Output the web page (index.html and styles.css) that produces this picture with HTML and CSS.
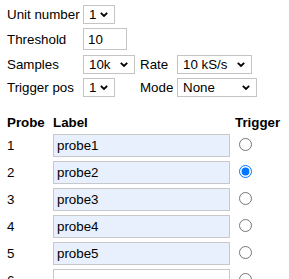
FILE: index.html
```html
<!DOCTYPE html>
<html lang="en">
<head>
  <meta charset="UTF-8">
  <title>Probe setup</title>
  <link rel="stylesheet" href="styles.css">
</head>
<body>

<table class="setup">
  <colgroup>
    <col class="k1"><col class="k2"><col class="k3"><col class="k4">
  </colgroup>
  <tr class="r1">
    <td>Unit number</td>
    <td colspan="3"><select class="sel w32"><option>1</option></select></td>
  </tr>
  <tr class="r2">
    <td>Threshold</td>
    <td colspan="3"><input type="text" class="num" value="10"></td>
  </tr>
  <tr class="r3">
    <td>Samples</td>
    <td><select class="sel w52"><option>10k</option></select></td>
    <td>Rate</td>
    <td><select class="sel w75"><option>10 kS/s</option></select></td>
  </tr>
  <tr class="r4">
    <td>Trigger pos</td>
    <td><select class="sel w32"><option>1</option></select></td>
    <td>Mode</td>
    <td><select class="sel w80"><option>None</option></select></td>
  </tr>
</table>

<table class="probes" id="probeTable">
  <colgroup>
    <col class="pcol"><col class="lcol"><col class="tcol">
  </colgroup>
  <tr class="head">
    <th>Probe</th>
    <th>Label</th>
    <th>Trigger</th>
  </tr>
</table>

<script>
const probes = ["probe1", "probe2", "probe3", "probe4", "probe5", ""];
const table = document.getElementById("probeTable");
probes.forEach((name, i) => {
  const row = document.createElement("tr");
  row.className = "prow";
  const num = document.createElement("td");
  num.textContent = i + 1;
  const lab = document.createElement("td");
  const input = document.createElement("input");
  input.type = "text";
  input.className = "plabel" + (name ? " filled" : "");
  input.value = name;
  lab.appendChild(input);
  const trig = document.createElement("td");
  trig.className = "trig";
  const radio = document.createElement("input");
  radio.type = "radio";
  radio.name = "trigger";
  if (i === 1) radio.checked = true;
  trig.appendChild(radio);
  row.appendChild(num);
  row.appendChild(lab);
  row.appendChild(trig);
  table.appendChild(row);
});
</script>
</body>
</html>
```

FILE: styles.css
```css
* { box-sizing: border-box; }
body {
  margin: 0;
  padding: 3px 0 0 7px;
  font-family: "Liberation Sans", Arial, sans-serif;
  font-size: 13.33px;
  color: #000;
  background: #fff;
}
table {
  border-collapse: collapse;
  border-spacing: 0;
  table-layout: fixed;
}
td, th {
  padding: 0;
  vertical-align: middle;
  text-align: left;
  white-space: nowrap;
}
.setup { width: 250px; }
.k1 { width: 76px; }
.k2 { width: 57px; }
.k3 { width: 37px; }
.k4 { width: 80px; }
.r1 { height: 23px; }
.r2 { height: 26px; }
.r3 { height: 25px; }
.r4 { height: 21px; }

.sel {
  -webkit-appearance: none;
  appearance: none;
  display: block;
  height: 19px;
  margin: 0;
  padding: 0 0 0 5px;
  font-family: inherit;
  font-size: 13.33px;
  color: #000;
  border: 1px solid #c4c4c4;
  border-radius: 0;
  background: #fff url("data:image/svg+xml;utf8,<svg xmlns='http://www.w3.org/2000/svg' width='8' height='5' viewBox='0 0 8 5'><path d='M0.8 0.8 L4 4 L7.2 0.8' fill='none' stroke='black' stroke-width='1.8'/></svg>") no-repeat right 6px center;
}
.w32 { width: 32px; }
.w52 { width: 52px; }
.w75 { width: 75px; }
.w80 { width: 80px; }

.num {
  display: block;
  width: 44px;
  height: 22px;
  margin: 0;
  padding: 0 4px;
  font-family: inherit;
  font-size: 13.33px;
  color: #000;
  border: 1px solid #c4c4c4;
}

.probes {
  width: 278px;
  margin-top: 14px;
}
.head { height: 20px; }
.head th { font-weight: bold; }
.pcol { width: 46px; }
.lcol { width: 182px; }
.tcol { width: 50px; }
.prow { height: 27px; }
.plabel {
  display: block;
  width: 177px;
  height: 23px;
  margin: 0;
  padding: 0 3px;
  font-family: inherit;
  font-size: 13.33px;
  color: #000;
  border: 1px solid #c8c8c8;
  background: #fff;
  outline: none;
}
.plabel.filled { background: #e8f0fe; }
.trig input {
  margin: 0 0 0 4px;
  width: 13px;
  height: 13px;
}
```
